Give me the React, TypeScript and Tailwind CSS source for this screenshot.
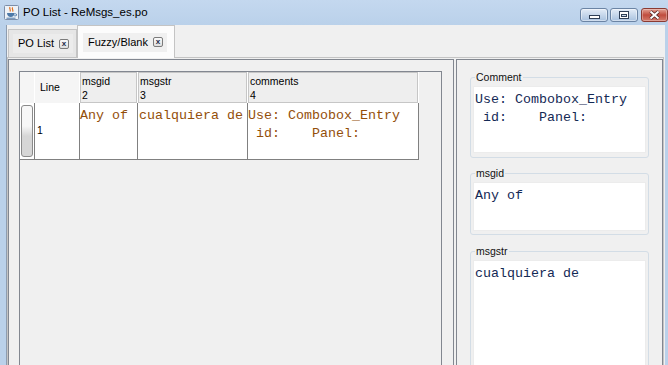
import React from "react";

const ui = "font-['Liberation_Sans',Arial,sans-serif]";
const mono = "font-['Liberation_Mono','Courier_New',monospace]";

function JavaIcon() {
  return (
    <svg width="15" height="15" viewBox="0 0 15 15">
      <rect x="0.5" y="0.5" width="14" height="14" rx="1" fill="#eef2f7" stroke="#7d8ea8" />
      <path d="M6 2c-1.2 1.5 1.2 2.5 0 4.5M8.6 2.4c-1.2 1.5 1.2 2.5 0 4.2" stroke="#e2701c" fill="none" strokeWidth="1.2" />
      <path d="M3 8h7.5c0 2.8-1.8 4-3.75 4S3 10.8 3 8z" fill="#4d79a8" />
      <path d="M10.4 8.8h1.2a1 1 0 0 1 0 2h-1.4" stroke="#4d79a8" fill="none" />
      <path d="M2.5 13.2h9" stroke="#4d79a8" />
    </svg>
  );
}

function TitleBar() {
  return (
    <div className="flex h-[25px] shrink-0 bg-linear-to-b from-[#c4d8ef] to-[#bad1ea]">
      <div className="ml-[4px] mt-[5px]">
        <JavaIcon />
      </div>
      <div className={`ml-[4px] mt-[5px] text-[11.5px] leading-[15px] text-black ${ui}`}>PO List - ReMsgs_es.po</div>
      <div className="ml-auto mt-[8px] flex h-[14px]">
        <div className="h-[14px] w-[28px] rounded-[3px] border border-[#6b84a4] bg-linear-to-b from-[#e3ecf7] via-[#c6d7eb] to-[#a8c1df] shadow-[inset_0_0_0_1px_rgba(255,255,255,0.45)]">
          <svg width="26" height="12" viewBox="0 0 26 12">
            <rect x="8.5" y="6.5" width="10" height="3" fill="#fff" stroke="#2e3f57" />
          </svg>
        </div>
        <div className="ml-[2px] h-[14px] w-[28px] rounded-[3px] border border-[#6b84a4] bg-linear-to-b from-[#e3ecf7] via-[#c6d7eb] to-[#a8c1df] shadow-[inset_0_0_0_1px_rgba(255,255,255,0.45)]">
          <svg width="26" height="12" viewBox="0 0 26 12">
            <rect x="8.5" y="2.5" width="9" height="7" fill="#fff" stroke="#2e3f57" />
            <rect x="10.5" y="5.5" width="5" height="2" fill="#c9d8ea" stroke="#2e3f57" />
          </svg>
        </div>
        <div className="ml-[3px] h-[14px] w-[27px] rounded-[3px] border border-[#8b3b33] bg-linear-to-b from-[#e2a195] via-[#c04b3d] to-[#d37a6c] shadow-[inset_0_0_0_1px_rgba(255,255,255,0.3)]">
          <svg width="25" height="12" viewBox="0 0 25 12">
            <path d="M8.5 2.5l8 7M16.5 2.5l-8 7" stroke="#4a2420" strokeWidth="3.6" />
            <path d="M8.5 2.5l8 7M16.5 2.5l-8 7" stroke="#fff" strokeWidth="2" />
          </svg>
        </div>
      </div>
    </div>
  );
}

function CloseBox() {
  return (
    <div className="flex h-[10px] w-[10px] items-center justify-center rounded-[2px] border border-[#7b7b7b] bg-linear-to-b from-[#fafafa] to-[#dedede]">
      <span className={`text-[8px] font-bold leading-none text-[#1c2a48] ${ui}`}>x</span>
    </div>
  );
}

function Tabs() {
  return (
    <div className={`flex h-[32px] shrink-0 pl-[1px] text-[11px] text-black ${ui}`}>
      <div className="mt-[4px] h-[28px] w-[69px] border border-b-0 border-[#c4c4c4] bg-[#e6e6e6] pl-[4px] pt-[4px]">
        <div className="flex h-[19px] w-[60px] items-center bg-[#ececec] pl-[5px]">
          <span className="leading-[13px]">PO List</span>
          <div className="ml-[5px]">
            <CloseBox />
          </div>
        </div>
      </div>
      <div className="relative z-10 h-[33px] w-[98px] border border-b-0 border-[#c4c4c4] bg-[#fcfcfc] pl-[5px] pt-[7px]">
        <div className="flex h-[19px] w-[84px] items-center bg-[#f0f0f0] pl-[5px]">
          <span className="leading-[13px]">Fuzzy/Blank</span>
          <div className="ml-[5px] -mt-[2px]">
            <CloseBox />
          </div>
        </div>
      </div>
    </div>
  );
}

function HeaderCell({ w, top, num }: { w: string; top: string; num: string }) {
  return (
    <div className={`${w} h-full border-r border-white`}>
      <div className="h-full border border-[#c6c6c6] bg-[#eeeeee] pl-[1px] pt-[1px] leading-[14px]">
        <div>{top}</div>
        <div>{num}</div>
      </div>
    </div>
  );
}

function Table() {
  const cell = `text-[13.33px] leading-[18px] whitespace-pre pt-[4px] text-[#934f0a] ${mono}`;
  return (
    <div>
      <div className={`flex h-[31px] text-[10.5px] text-black ${ui}`}>
        <div className="h-full w-[15px] border-r border-white bg-[#f5f5f5]" />
        <div className="flex h-full w-[45px] items-center border-r border-white bg-[#f5f5f5] pl-[5px] pt-[1px]">Line</div>
        <HeaderCell w="w-[58px]" top="msgid" num="2" />
        <HeaderCell w="w-[110px]" top="msgstr" num="3" />
        <HeaderCell w="w-[171px]" top="comments" num="4" />
      </div>
      <div className="flex h-[57px] w-[399px] border-b border-[#808080]">
        <div className="h-full w-[15px] border-r border-[#808080] bg-white pl-[1px] pt-[2px]">
          <div className="h-[52px] w-[12px] rounded-[3px] border border-[#8a8a8a] bg-linear-to-b from-[#f7f7f7] from-40% to-[#d6d6d6] to-60%" />
        </div>
        <div className={`flex h-full w-[45px] items-center border-r border-[#808080] bg-white pl-[2px] text-[10.5px] text-black ${ui}`}>1</div>
        <div className={`h-full w-[58px] border-r border-[#808080] bg-white ${cell}`}>Any of</div>
        <div className={`h-full w-[110px] border-r border-[#808080] bg-white pl-[1px] ${cell}`}>cualquiera de</div>
        <div className={`h-full w-[171px] border-r border-[#808080] bg-white ${cell}`}>
          {"Use: Combobox_Entry\n id:    Panel:"}
        </div>
      </div>
    </div>
  );
}

function Group({ label, text, h, className }: { label: string; text: string; h: string; className: string }) {
  return (
    <fieldset className={`rounded-[3px] border border-[#d3dde6] px-[2px] ${className}`}>
      <legend className={`ml-[2px] px-[1px] text-[10.5px] leading-[13px] text-[#111] ${ui}`}>{label}</legend>
      <div className={`${h} mt-[2px] border border-[#ececec] bg-white pl-[1px] pt-[4px] text-[13.33px] leading-[18px] whitespace-pre text-[#142a55] ${mono}`}>
        {text}
      </div>
    </fieldset>
  );
}

export default function App() {
  return (
    <div className="flex h-[365px] w-[668px] flex-col overflow-hidden bg-[#f0f0f0]">
      <TitleBar />
      <div className="flex min-h-0 flex-1">
        <div className="w-[7px] border-r border-[#8e9db0] bg-[#bad1ea]" />
        <div className="flex min-w-0 flex-1 flex-col">
          <Tabs />
          <div className="flex min-h-0 flex-1 border-x border-t border-[#c4c4c4] pt-[1px]">
            <div className="w-[446px] border-x border-t border-[#828790] pl-[10px] pr-[11px] pt-[11px]">
              <div className="h-full border-x border-t border-[#828790] bg-[#f0f0f0]">
                <Table />
              </div>
            </div>
            <div className="w-[2px]" />
            <div className="flex flex-1 flex-col overflow-hidden border-x border-t border-[#828790] px-[13px] pt-[11px]">
              <Group label="Comment" text={"Use: Combobox_Entry\n id:    Panel:"} h="h-[67px]" className="pb-[4px]" />
              <Group label="msgid" text="Any of" h="h-[49px]" className="mt-[9px] pb-[3px]" />
              <Group label="msgstr" text="cualquiera de" h="h-[140px]" className="mt-[10px] shrink-0" />
            </div>
          </div>
        </div>
        <div className="w-[4px] border-l border-[#f0f0f0] bg-[#bad1ea]" />
      </div>
    </div>
  );
}
